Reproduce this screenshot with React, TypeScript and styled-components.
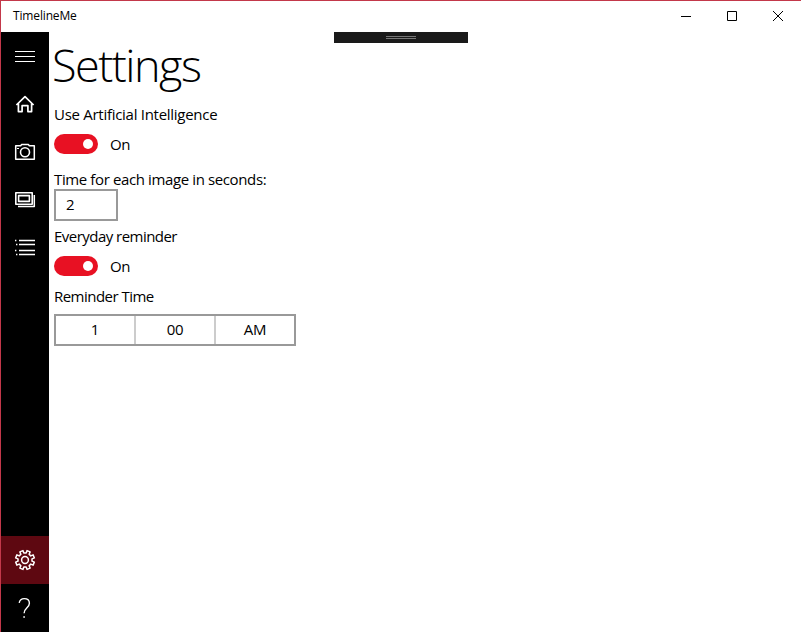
import React from "react";
import styled, { createGlobalStyle } from "styled-components";

const GlobalStyle = createGlobalStyle`
  * { box-sizing: border-box; }
  body {
    margin: 0;
    background: #fff;
    color: #000;
    font: 15px/20px "Open Sans", "Noto Sans", sans-serif;
  }
`;

const Window = styled.div`
  display: flex;
  flex-direction: column;
  width: 801px;
  height: 632px;
  overflow: hidden;
  border: solid #c3384a;
  border-width: 1px 0 0 1px;
  background: #fff;
`;

const TitleBar = styled.header`
  display: flex;
  justify-content: space-between;
  height: 31px;
  flex: none;
`;

const AppName = styled.span`
  padding: 5px 0 0 12px;
  font-size: 12px;
  letter-spacing: -0.15px;
`;

const Captions = styled.div`
  display: flex;
`;

const CaptionButton = styled.button`
  width: 46px;
  height: 31px;
  padding: 0;
  border: 0;
  background: none;
  svg { display: block; }
`;

const Body = styled.div`
  display: flex;
  flex: 1;
  position: relative;
`;

const Nav = styled.nav`
  display: flex;
  flex-direction: column;
  width: 48px;
  background: #000;
`;

const NavButton = styled.button<{ $active?: boolean }>`
  width: 48px;
  height: 48px;
  padding: 0;
  border: 0;
  color: #fff;
  background: ${(p) => (p.$active ? "#5e0811" : "transparent")};
  svg { display: block; }
`;

const Spacer = styled.div`
  flex: 1;
`;

const Page = styled.main`
  display: flex;
  flex-direction: column;
  align-items: flex-start;
  padding: 3px 0 0 5px;
`;

const Title = styled.h1`
  margin: 0 0 9px -2px;
  height: 60px;
  font-size: 45px;
  line-height: 60px;
  font-weight: 300;
  letter-spacing: -1.5px;
`;

const Label = styled.div<{ $gap: number; $track: number }>`
  height: 20px;
  margin-bottom: ${(p) => p.$gap}px;
  letter-spacing: ${(p) => p.$track}px;
  white-space: nowrap;
`;

const ToggleRow = styled.div<{ $gap: number }>`
  display: flex;
  gap: 12px;
  height: 20px;
  margin-bottom: ${(p) => p.$gap}px;
  letter-spacing: -0.5px;
`;

const Track = styled.span`
  display: flex;
  align-items: center;
  justify-content: flex-end;
  width: 44px;
  height: 20px;
  padding-right: 5px;
  border-radius: 10px;
  background: #e81123;
`;

const Knob = styled.span`
  width: 10px;
  height: 10px;
  border-radius: 50%;
  background: #fff;
`;

const NumberBox = styled.div`
  width: 64px;
  height: 32px;
  margin-bottom: 5px;
  padding: 3px 10px;
  border: 2px solid #999;
`;

const TimePicker = styled.div`
  display: flex;
  width: 242px;
  height: 32px;
  border: 2px solid #999;
`;

const TimeCell = styled.div`
  width: 80px;
  padding-top: 3px;
  text-align: center;
  letter-spacing: -0.3px;
  & + & { border-left: 2px solid #ccc; }
  &:first-child { width: 78px; }
`;

const DebugHandle = styled.div`
  position: absolute;
  left: 333px;
  top: 0;
  display: flex;
  justify-content: center;
  width: 134px;
  height: 11px;
  padding-top: 4px;
  background: #1a1a1a;
`;

const Grip = styled.span`
  width: 30px;
  height: 3px;
  border: solid #777;
  border-width: 1px 0;
`;

const icons = {
  menu: <path d="M14 19.5h20M14 24.5h20M14 29.5h20" />,
  home: (
    <path d="M15.4 25 24 16.6l8.6 8.4M17.4 23.4v8.2h3.7v-5.9h5.8v5.9h3.7v-8.2" strokeWidth="1.7" />
  ),
  camera: (
    <>
      <path d="M14.7 17.8h5l1-1.4h6.6l1 1.4h5v13.4H14.7z" strokeWidth="1.5" />
      <circle cx="24" cy="24.2" r="4.5" strokeWidth="1.6" />
      <path d="M16 20.5h2" />
    </>
  ),
  album: (
    <>
      <path d="M14.8 16.8h16.4v11.4H14.8z" strokeWidth="1.6" />
      <path d="M17.6 19.6h10.8v5.8H17.6z" strokeWidth="1.6" />
      <path d="M33.3 19v11.6H17" strokeWidth="1.5" />
    </>
  ),
  list: (
    <path
      d="M14 16.5h1.4M18 16.5h16M15 20.5h1.4M18 20.5h16M14 26.5h1.4M18 26.5h16M15 30.5h1.4M18 30.5h16"
      strokeWidth="1.4"
    />
  ),
  help: (
    <>
      <path d="M18.2 18.8c.5-2.6 2.4-4.2 5-4.2 3.2 0 5.2 1.9 5.2 4.6 0 4.6-5.3 4.4-5.3 10" strokeWidth="1.4" />
      <path d="M22.3 33h1.6" strokeWidth="1.6" />
    </>
  ),
};

const gearPath = () => {
  const points: string[] = [];
  for (let i = 0; i < 8; i++) {
    const steps: [number, number][] = [[-13, 7.1], [-10, 9.6], [10, 9.6], [13, 7.1]];
    for (const [offset, radius] of steps) {
      const angle = ((i * 45 + 22.5 + offset) * Math.PI) / 180;
      points.push(`${(24 + radius * Math.cos(angle)).toFixed(2)} ${(24 + radius * Math.sin(angle)).toFixed(2)}`);
    }
  }
  return `M${points.join("L")}Z`;
};

const Icon = ({ children }: { children: React.ReactNode }) => (
  <svg width="48" height="48" fill="none" stroke="currentColor" strokeLinejoin="round">
    {children}
  </svg>
);

const Toggle = ({ gap }: { gap: number }) => (
  <ToggleRow $gap={gap}>
    <Track><Knob /></Track>
    <span>On</span>
  </ToggleRow>
);

export default function App() {
  return (
    <>
      <GlobalStyle />
      <Window>
        <TitleBar>
          <AppName>TimelineMe</AppName>
          <Captions>
            {["M18 15.5h10", "M18.5 10.5h9v9h-9z", "M18 10l10 10M28 10l-10 10"].map((d) => (
              <CaptionButton key={d}>
                <svg width="46" height="31" fill="none" stroke="#000"><path d={d} /></svg>
              </CaptionButton>
            ))}
          </Captions>
        </TitleBar>
        <Body>
          <Nav>
            <NavButton><Icon>{icons.menu}</Icon></NavButton>
            <NavButton><Icon>{icons.home}</Icon></NavButton>
            <NavButton><Icon>{icons.camera}</Icon></NavButton>
            <NavButton><Icon>{icons.album}</Icon></NavButton>
            <NavButton><Icon>{icons.list}</Icon></NavButton>
            <Spacer />
            <NavButton $active>
              <Icon>
                <path d={gearPath()} strokeWidth="1.5" />
                <circle cx="24" cy="24" r="3.4" strokeWidth="1.5" />
              </Icon>
            </NavButton>
            <NavButton><Icon>{icons.help}</Icon></NavButton>
          </Nav>
          <Page>
            <Title>Settings</Title>
            <Label $gap={10} $track={-0.28}>Use Artificial Intelligence</Label>
            <Toggle gap={15} />
            <Label $gap={0} $track={-0.38}>Time for each image in seconds:</Label>
            <NumberBox>2</NumberBox>
            <Label $gap={10} $track={-0.53}>Everyday reminder</Label>
            <Toggle gap={10} />
            <Label $gap={8} $track={-0.53}>Reminder Time</Label>
            <TimePicker>
              <TimeCell>1</TimeCell>
              <TimeCell>00</TimeCell>
              <TimeCell>AM</TimeCell>
            </TimePicker>
          </Page>
          <DebugHandle><Grip /></DebugHandle>
        </Body>
      </Window>
    </>
  );
}
